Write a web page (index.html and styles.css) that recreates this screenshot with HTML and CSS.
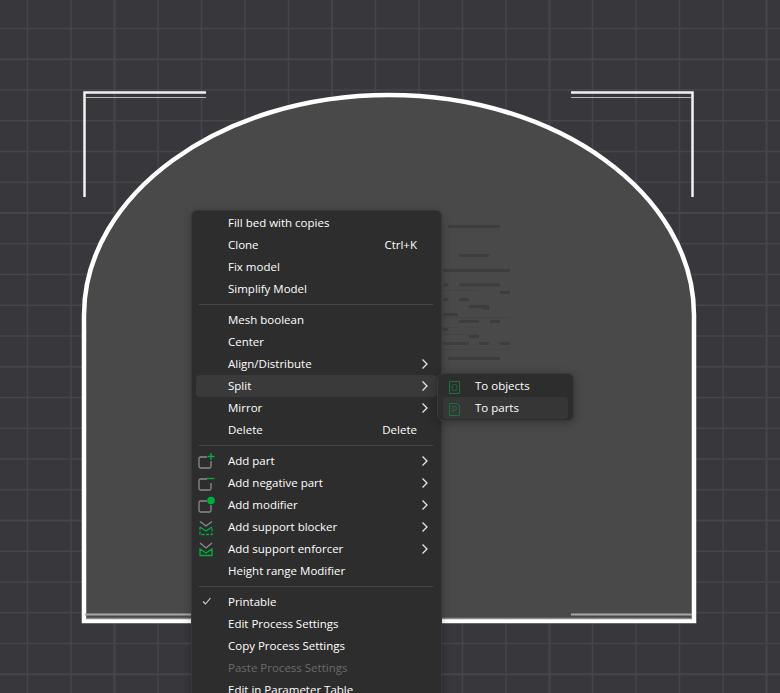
FILE: index.html
```html
<!DOCTYPE html>
<html lang="en">
<head>
<meta charset="utf-8">
<title>Slicer plate context menu</title>
<link rel="stylesheet" href="styles.css">
</head>
<body>
<main class="stage">
  <svg class="plate" width="780" height="693" viewBox="0 0 780 693" aria-hidden="true">
    <path class="grid" d="M27.5 0V693M71 0V693M158 0V693M201.5 0V693M245 0V693M288.5 0V693M375.5 0V693M419 0V693M462.5 0V693M506 0V693M592.5 0V693M636 0V693M679.5 0V693M723 0V693M0 28.5H780M0 90H780M0 120.75H780M0 151.5H780M0 182.25H780M0 243.75H780M0 274.5H780M0 305.25H780M0 336H780M0 397.5H780M0 428.25H780M0 459H780M0 489.75H780M0 551.25H780M0 582H780M0 612.75H780M0 643.5H780"/>
    <path class="grid grid-major" d="M114.5 0V693M332 0V693M549.5 0V693M766.5 0V693M0 59.25H780M0 213H780M0 366.75H780M0 520.5H780M0 674.25H780"/>
    <path class="bed" d="M84 621V315C84 195 220 95 389 95C558 95 694 195 694 315V621Z"/>
    <path class="ghost" d="M448 226.5H500M459 255.5H489M443 270.5H510M443 285H448M459 285H500M500 292.5H510M443 299.5H448M459 299.5H469M469 306.5H489M483 308H489M443 314.5H458M459 321.5H479M490 321.5H500M443 329.5H448M469 336.5H479M443 343.5H469M479 343.5H489M500 343.5H510M448 358.5H500"/>
    <path class="ghost-thin" d="M443 290.5H478M443 317.5H510M443 327.5H458M469 327.5H479M443 334.5H479M443 349.5H510"/>
    <path class="bed-inner" d="M86 618.5H692"/>
    <path class="mark-soft" d="M85 614.5H206M571 614.5H692"/>
    <path class="mark" d="M84.5 197V92.5H206M571 92.5H692.5V197"/>
    <path class="mark-thin" d="M86 97.5H206M571 97.5H691"/>
  </svg>

  <nav class="menu">
    <ul class="menu-list">
      <li class="item"><span class="label">Fill bed with copies</span></li>
      <li class="item"><span class="label">Clone</span><span class="shortcut">Ctrl+K</span></li>
      <li class="item"><span class="label">Fix model</span></li>
      <li class="item"><span class="label">Simplify Model</span></li>
      <li class="sep"></li>
      <li class="item"><span class="label">Mesh boolean</span></li>
      <li class="item"><span class="label">Center</span></li>
      <li class="item"><span class="label">Align/Distribute</span><svg class="chev" width="8" height="12" viewBox="0 0 8 12"><path d="M1.5 1.5 6 6 1.5 10.5"/></svg></li>
      <li class="item item-open">
        <span class="label">Split</span><svg class="chev" width="8" height="12" viewBox="0 0 8 12"><path d="M1.5 1.5 6 6 1.5 10.5"/></svg>
        <ul class="submenu">
          <li class="item sub-item">
            <svg class="doc" width="11" height="13" viewBox="0 0 11 13"><path d="M.5.5H10.5V12.5H.5Z"/><text x="5.500" y="10" text-anchor="middle">O</text></svg>
            <span>To objects</span>
          </li>
          <li class="item sub-item sub-hover">
            <svg class="doc" width="11" height="13" viewBox="0 0 11 13"><path d="M.5.5H8L10.5 3V12.5H.5Z"/><text x="5.500" y="10" text-anchor="middle">P</text></svg>
            <span>To parts</span>
          </li>
        </ul>
      </li>
      <li class="item"><span class="label">Mirror</span><svg class="chev" width="8" height="12" viewBox="0 0 8 12"><path d="M1.5 1.5 6 6 1.5 10.5"/></svg></li>
      <li class="item"><span class="label">Delete</span><span class="shortcut">Delete</span></li>
      <li class="sep"></li>
      <li class="item">
        <svg class="lead" width="18" height="18" viewBox="0 0 18 18"><path class="ic-box" d="M9 5H2.500Q1 5 1 6.500V14.500Q1 16 2.500 16H11.500Q13 16 13 14.500V9"/><path class="ic-green" d="M13 1V8M9.500 4.500H16.500"/></svg>
        <span class="label">Add part</span><svg class="chev" width="8" height="12" viewBox="0 0 8 12"><path d="M1.500 1.500 6 6 1.500 10.500"/></svg>
      </li>
      <li class="item">
        <svg class="lead" width="18" height="18" viewBox="0 0 18 18"><path class="ic-box" d="M9 5H2.500Q1 5 1 6.500V14.500Q1 16 2.500 16H11.500Q13 16 13 14.500V9"/><path class="ic-green" d="M9 4.500H16.500"/></svg>
        <span class="label">Add negative part</span><svg class="chev" width="8" height="12" viewBox="0 0 8 12"><path d="M1.500 1.500 6 6 1.500 10.500"/></svg>
      </li>
      <li class="item">
        <svg class="lead" width="18" height="18" viewBox="0 0 18 18"><path class="ic-box" d="M9 5H2.500Q1 5 1 6.500V14.500Q1 16 2.500 16H11.500Q13 16 13 14.500V9"/><circle class="ic-dot" cx="13" cy="4.500" r="3.800"/></svg>
        <span class="label">Add modifier</span><svg class="chev" width="8" height="12" viewBox="0 0 8 12"><path d="M1.500 1.500 6 6 1.500 10.500"/></svg>
      </li>
      <li class="item">
        <svg class="lead" width="18" height="18" viewBox="0 0 18 18"><path class="ic-v" d="M2 3.500 8 8 14 3.500"/><path class="ic-dash" d="M2 9V16.500H14V9"/><path class="ic-green" d="M2 9 8 13 14 9"/></svg>
        <span class="label">Add support blocker</span><svg class="chev" width="8" height="12" viewBox="0 0 8 12"><path d="M1.500 1.500 6 6 1.500 10.500"/></svg>
      </li>
      <li class="item">
        <svg class="lead" width="18" height="18" viewBox="0 0 18 18"><path class="ic-v" d="M2 3 8 8 14 3"/><path class="ic-green" d="M2 9V15.500H14V9L8 13Z"/></svg>
        <span class="label">Add support enforcer</span><svg class="chev" width="8" height="12" viewBox="0 0 8 12"><path d="M1.500 1.500 6 6 1.500 10.500"/></svg>
      </li>
      <li class="item"><span class="label">Height range Modifier</span></li>
      <li class="sep"></li>
      <li class="item">
        <svg class="check" width="18" height="18" viewBox="0 0 18 18"><path d="M5 9.500 7.500 12 12.500 6"/></svg>
        <span class="label">Printable</span>
      </li>
      <li class="item"><span class="label">Edit Process Settings</span></li>
      <li class="item"><span class="label">Copy Process Settings</span></li>
      <li class="item item-disabled"><span class="label">Paste Process Settings</span></li>
      <li class="item"><span class="label">Edit in Parameter Table</span></li>
    </ul>
  </nav>
</main>
</body>
</html>
```

FILE: styles.css
```css
* { box-sizing: border-box; }
html, body { margin: 0; padding: 0; }
body { background: #37373c; }

.stage {
  position: relative;
  width: 780px;
  height: 693px;
  overflow: hidden;
  background: #37373c;
  font-family: "Open Sans", "Noto Sans", sans-serif;
  font-size: 11.500px;
  color: #fff;
}

.plate { position: absolute; inset: 0; display: block; }
.grid { fill: none; stroke: #45454b; stroke-width: 1.500; }
.grid-major { stroke-width: 2.200; }
.bed { fill: #494949; stroke: #fff; stroke-width: 4.500; }
.ghost { fill: none; stroke: #3d3d3d; stroke-width: 3; }
.ghost-thin { fill: none; stroke: #444; stroke-width: 1; }
.bed-inner { fill: none; stroke: #8c8c8c; stroke-width: 1.500; }
.mark { fill: none; stroke: #f2f2f2; stroke-width: 2.500; }
.mark-soft { fill: none; stroke: #a8a8a8; stroke-width: 2; }
.mark-thin { fill: none; stroke: #b5b5b5; stroke-width: 1; }

.menu {
  position: absolute;
  left: 191px;
  top: 210px;
  width: 251px;
  height: 520px;
  background: #2d2d2d;
  border: 1px solid #383838;
  border-radius: 6px;
  box-shadow: 0 2px 8px rgba(0, 0, 0, .25);
  padding: 1px 4px;
}
.menu-list, .submenu { list-style: none; margin: 0; padding: 0; }

.item {
  position: relative;
  display: flex;
  align-items: center;
  height: 22px;
  padding: 0 8px 2px 32px;
  border-radius: 4px;
  white-space: nowrap;
}
.label { flex: 1; }
.shortcut { padding-right: 12px; }
.sep { height: 1px; margin: 4px 4px 4px 3px; background: #464646; }

.item-open { background: #3a3a3a; }
.item-disabled { color: #6b6b6b; }

.chev { fill: none; stroke: #e6e6e6; stroke-width: 1.300; flex: none; margin-top: 2px; }

.lead, .check { position: absolute; left: 2px; }
.lead { top: 2px; }
.check { top: 1px; }
.ic-box { fill: none; stroke: #8c8c8c; stroke-width: 1.300; }
.ic-green { fill: none; stroke: #00ae42; stroke-width: 1.300; }
.ic-dot { fill: #00ae42; }
.ic-v { fill: none; stroke: #8c8c8c; stroke-width: 1.300; }
.ic-dash { fill: none; stroke: #00ae42; stroke-width: 1.300; stroke-dasharray: 3 1.500; }
.check path { fill: none; stroke: #d8d8d8; stroke-width: 1.100; }

.submenu {
  position: absolute;
  left: 241px;
  top: -2px;
  width: 137px;
  padding: 1px 5px;
  background: #2d2d2d;
  border: 1px solid #3a3a3a;
  border-radius: 6px;
  box-shadow: 0 2px 10px rgba(0, 0, 0, .3);
  z-index: 1;
}
.sub-item { padding-left: 32px; }
.sub-hover { background: #363636; }
.doc { position: absolute; left: 6px; top: 6px; }
.doc path { fill: none; stroke: #1f7040; stroke-width: 1; }
.doc text { fill: #1f7040; font-size: 9px; font-family: "Open Sans", sans-serif; }
```
